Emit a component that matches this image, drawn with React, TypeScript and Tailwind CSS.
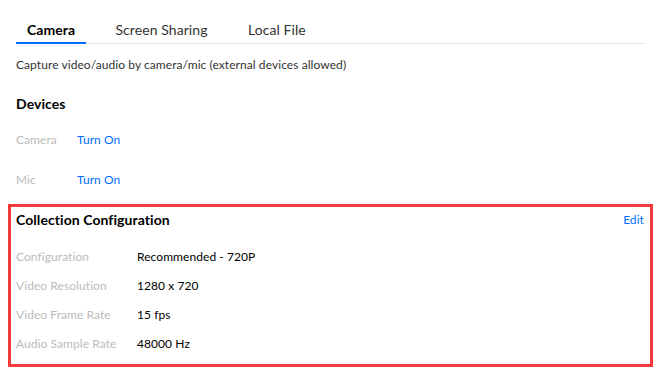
const rows = [
  { label: 'Configuration', value: 'Recommended - 720P' },
  { label: 'Video Resolution', value: '1280 x 720' },
  { label: 'Video Frame Rate', value: '15 fps' },
  { label: 'Audio Sample Rate', value: '48000 Hz' },
]

export default function App() {
  return (
    <div className="w-[661px] h-[377px] bg-white font-['Lato','Segoe_UI',sans-serif] tracking-[0.07px] text-[#333] overflow-hidden">
      <div className="pl-4 pr-[15px] pt-px">
        {/* Tabs */}
        <div className="flex gap-5 h-[43px] border-b border-[#e7e7e7]">
          <div className="w-[70px] text-center pt-[19px] text-[14px] leading-5 font-bold text-black border-b-2 border-[#006eff] -mb-px">
            Camera
          </div>
          <div className="w-[111px] text-center pt-[19px] text-[14px] leading-5 text-[#333]">Screen Sharing</div>
          <div className="px-[11px] pt-[19px] text-[14px] leading-5 text-[#333]">Local File</div>
        </div>

        <p className="mt-[11px] text-[12px] leading-5 text-[#333]">
          Capture video/audio by camera/mic (external devices allowed)
        </p>

        <h2 className="mt-[19px] text-[14px] leading-5 font-bold text-black">Devices</h2>

        <div className="mt-4 flex text-[12px] leading-5">
          <span className="w-[61px] text-[#bbb]">Camera</span>
          <span className="text-[#006eff] cursor-pointer">Turn On</span>
        </div>
        <div className="mt-5 flex text-[12px] leading-5">
          <span className="w-[61px] text-[#bbb]">Mic</span>
          <span className="text-[#006eff] cursor-pointer">Turn On</span>
        </div>
      </div>

      {/* Collection Configuration */}
      <div className="mt-[14px] ml-2 w-[645px] border-[3px] border-[#f33a3a] pl-[5px] pr-[6px] pt-[3px] pb-[10px]">
        <div className="flex justify-between items-center">
          <h2 className="text-[14px] leading-5 font-bold text-black">Collection Configuration</h2>
          <span className="text-[12px] leading-5 text-[#006eff] cursor-pointer">Edit</span>
        </div>
        <div className="mt-[17px] flex flex-col gap-[9px]">
          {rows.map((r) => (
            <div key={r.label} className="flex text-[12px] leading-5">
              <span className="w-[121px] text-[#bbb]">{r.label}</span>
              <span className="text-black">{r.value}</span>
            </div>
          ))}
        </div>
      </div>
    </div>
  )
}
